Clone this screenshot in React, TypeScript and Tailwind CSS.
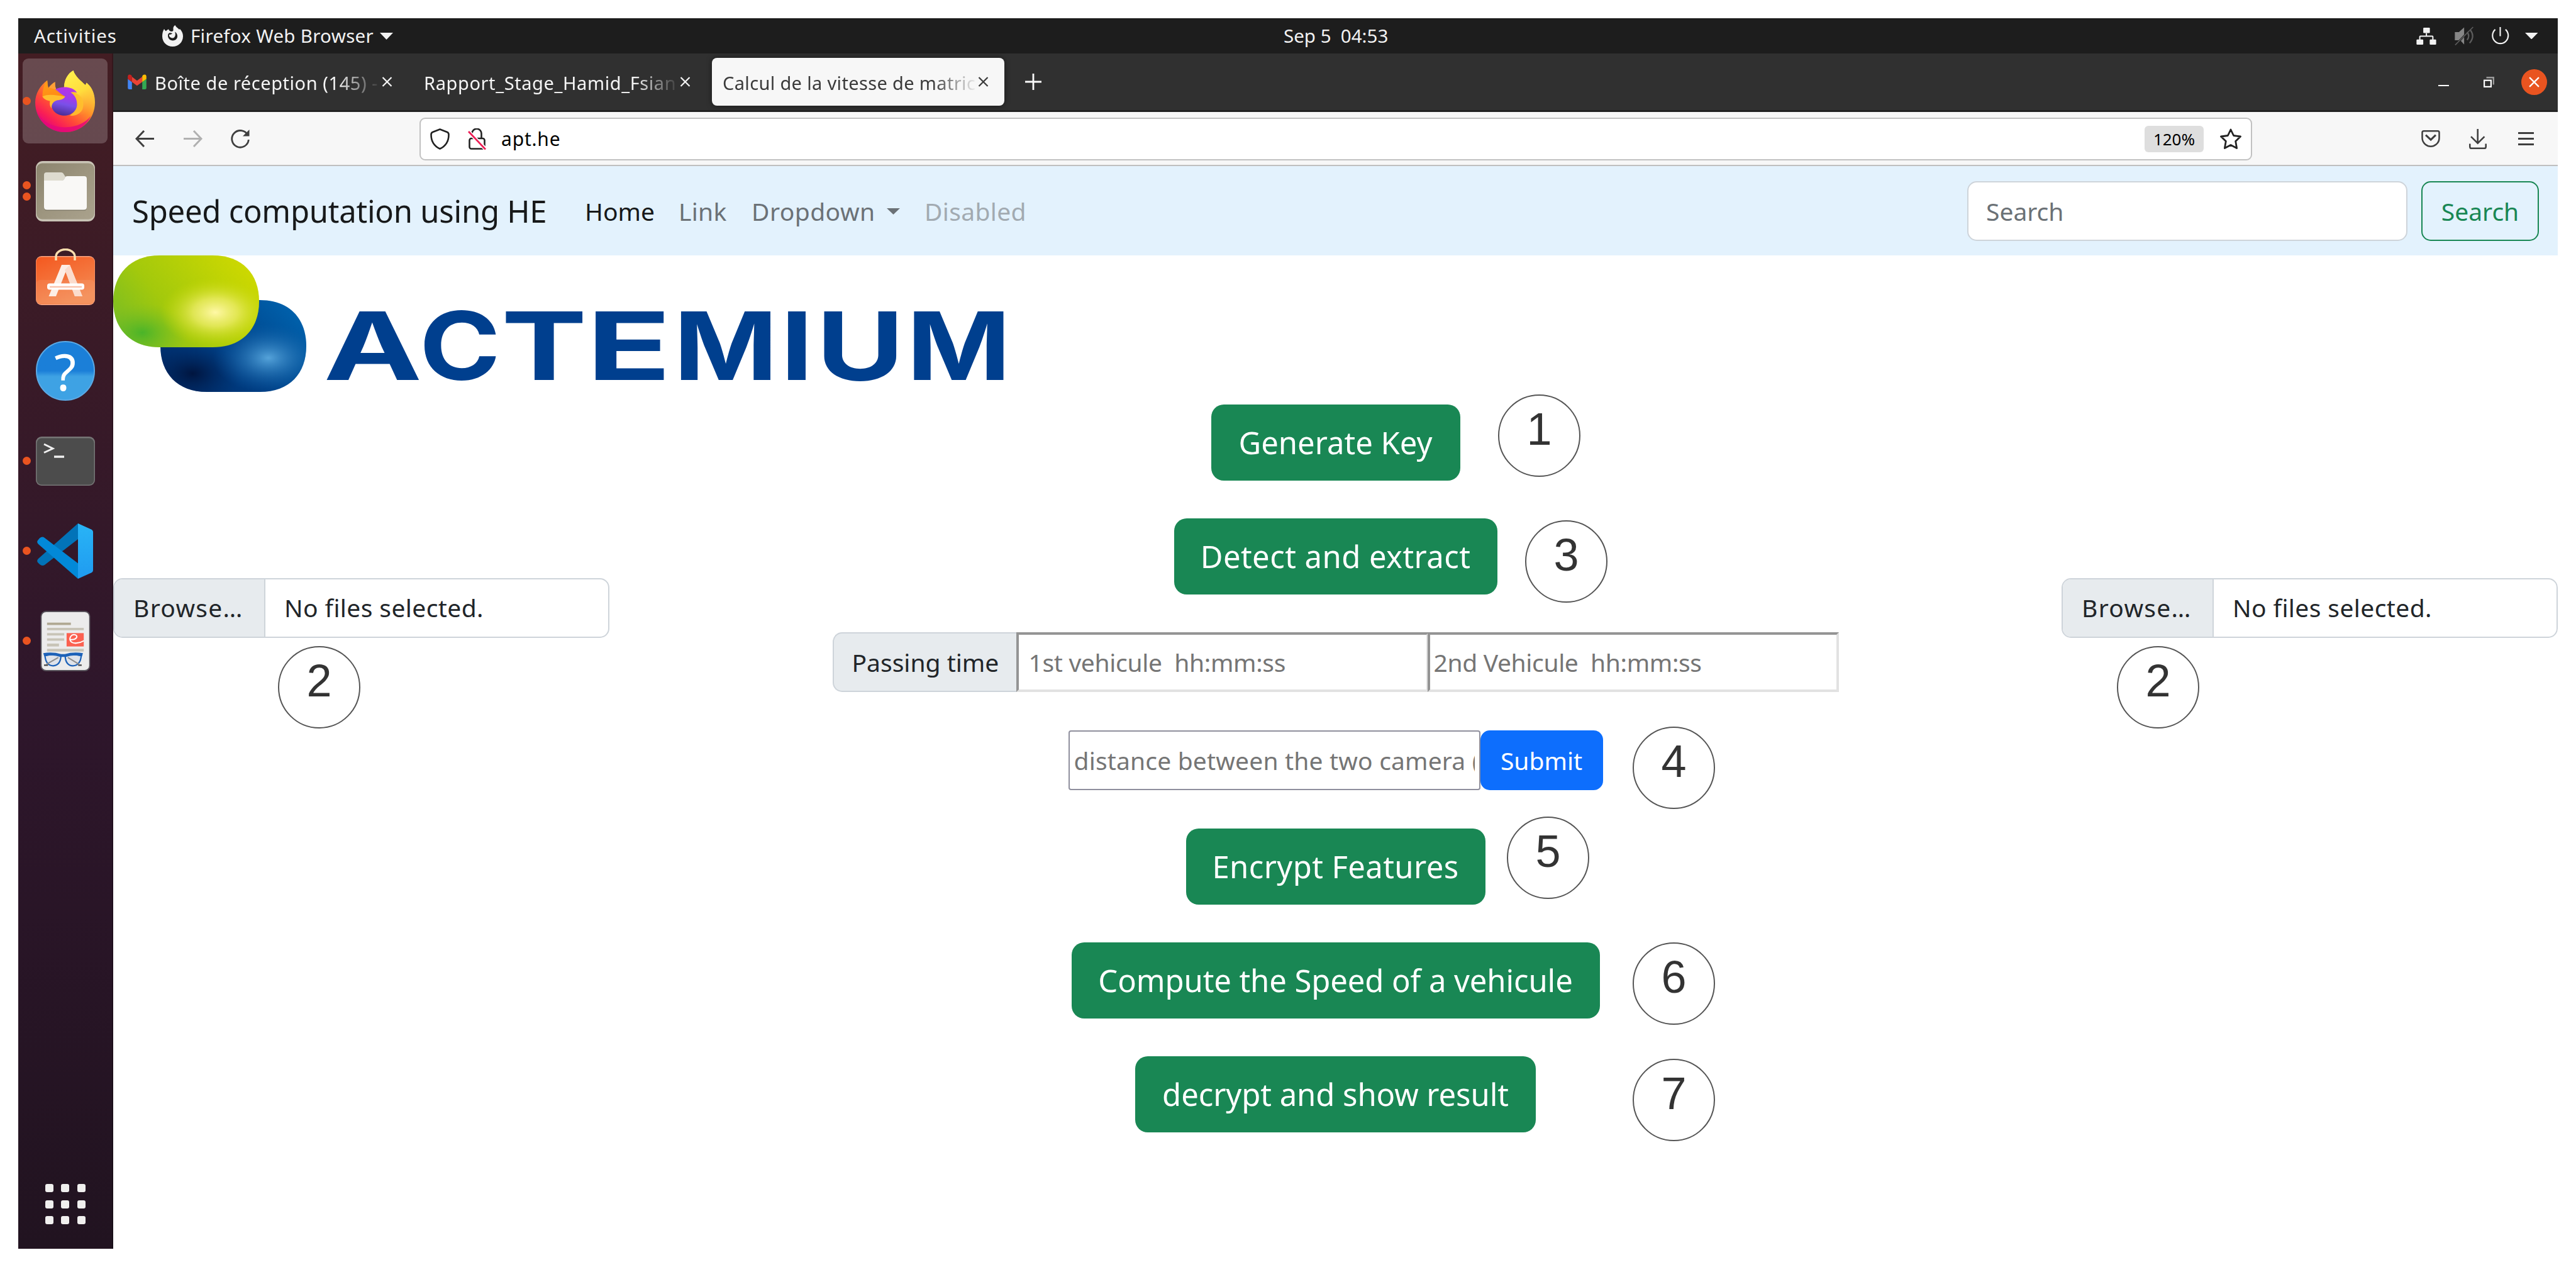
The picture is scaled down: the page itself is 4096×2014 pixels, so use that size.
import type { ReactNode } from "react";

/* ---------- small icons ---------- */

function Triangle({ className }: { className: string }) {
  return (
    <svg className={className} viewBox="0 0 20 10" preserveAspectRatio="none" fill="currentColor">
      <path d="M0 0H20L10 10Z" />
    </svg>
  );
}

function FirefoxMono() {
  return (
    <svg className="h-[34px] w-[33px]" viewBox="0 0 33 34">
      <path
        fill="#f2f2f2"
        fillRule="evenodd"
        d="M3 6C4 8 5 9 6 9.500C7 8 8.500 7 10 6.500C10.500 8 12 9.500 14 10C16 10 18 9.500 17.500 7C17 4 18 1.500 20.500 0C21.500 3 25 4.500 27 7L28 6C31 9 33 13 33 17.500C33 27 26 34 16.500 34C7 34 0 27 0 17.500C0 13 1 9 3 6ZM11 15C13 15 15 14.500 16 13C13.500 12 11 11.500 9.500 14C8 18 10 24 16.500 24.500C22 24.500 24.500 20.500 24 16.500C23.600 13.500 22 11.500 20 10.500C22 14.500 20.500 21 16 20.500C12.500 20 10.500 18 11 15Z"
      />
    </svg>
  );
}

function NetworkIcon() {
  return (
    <svg className="h-[27px] w-[32px]" viewBox="53 42 125 108">
      <g fill="#f2f2f2">
        <rect x="96" y="42" width="42" height="34" rx="5" />
        <rect x="53" y="117" width="43" height="33" rx="5" />
        <rect x="137" y="117" width="41" height="33" rx="5" />
      </g>
      <path d="M116 76V96M74 118V100Q74 96 78 96H153Q157 96 157 100V118" fill="none" stroke="#f2f2f2" strokeWidth="8" />
    </svg>
  );
}

function MutedIcon() {
  return (
    <svg className="h-[30px] w-[30px]" viewBox="293 40 119 120">
      <path d="M294 76H320L353 46V92L318 128H294Z" fill="#868686" />
      <path d="M353 108V155L332 132Z" fill="#868686" />
      <path d="M296 158L410 44" stroke="#5c5c5c" strokeWidth="7" />
      <path d="M372 76Q392 100 372 126M392 62Q424 104 388 146" fill="none" stroke="#5c5c5c" strokeWidth="9" />
    </svg>
  );
}

function PowerIcon() {
  return (
    <svg className="h-[28px] w-[28px]" viewBox="527 42 110 110" fill="none" stroke="#f2f2f2" strokeWidth="8.500">
      <path d="M580 42V99" />
      <path d="M549 57A49 50 0 1 0 613 57" />
    </svg>
  );
}

function Cross({ className }: { className: string }) {
  return (
    <svg className={className} viewBox="0 0 16 16" fill="none" stroke="currentColor" strokeWidth="2.200">
      <path d="M1 1L15 15M15 1L1 15" />
    </svg>
  );
}

function GmailIcon() {
  return (
    <svg className="h-[24px] w-[30px] shrink-0" viewBox="680 108 117 95">
      <path d="M680 138L706 156V203H690Q680 203 680 193Z" fill="#4285f4" />
      <path d="M797 138L771 156V203H787Q797 203 797 193Z" fill="#34a853" />
      <path d="M706 124L738 149L771 124V156L738 180L706 156Z" fill="#ea4335" />
      <path d="M680 138V122Q682 104 700 112L706 120V156Z" fill="#c5221f" />
      <path d="M797 138V122Q795 104 777 112L771 120V156Z" fill="#fbbc04" />
    </svg>
  );
}

function ArrowIcon({ className }: { className: string }) {
  return (
    <svg className={className} viewBox="0 0 30 27" fill="none" stroke="currentColor" strokeWidth="3">
      <path d="M30 13.500H2M14 1L2 13.500L14 26" />
    </svg>
  );
}

function ReloadIcon() {
  return (
    <svg className="ml-[45px] h-[30px] w-[30px]" viewBox="0 0 30 30" fill="none" stroke="#3f3f3f" strokeWidth="2.800">
      <path d="M27 9A13.300 13.300 0 1 0 28.300 16" />
      <path d="M29.500 0V10.500H19Z" fill="#3f3f3f" stroke="none" />
    </svg>
  );
}

function ShieldIcon() {
  return (
    <svg className="ml-[15px] h-[34px] w-[31px]" viewBox="0 0 31 34" fill="none" stroke="#222" strokeWidth="2.600">
      <path d="M15.500 1.500L27 6Q29.500 7 29.500 10Q29.500 26 15.500 32.500Q1.500 26 1.500 10Q1.500 7 4 6Z" strokeLinejoin="round" />
    </svg>
  );
}

function InsecureLockIcon() {
  return (
    <svg className="ml-[29px] h-[34px] w-[29px]" viewBox="0 0 29 34" fill="none">
      <rect x="2.500" y="16" width="24" height="16.500" rx="3" stroke="#222" strokeWidth="2.600" />
      <path d="M6.500 8A7.500 7.500 0 0 1 21.500 8.500V15.500" stroke="#222" strokeWidth="2.600" />
      <path d="M1 5L28 33" stroke="#fff" strokeWidth="6" />
      <path d="M1 5L28 33.500" stroke="#ee1f56" strokeWidth="2.800" />
    </svg>
  );
}

function StarIcon() {
  return (
    <svg className="mr-[14px] ml-[25px] h-[34px] w-[36px]" viewBox="0 0 36 34" fill="none" stroke="#222" strokeWidth="2.800" strokeLinejoin="round">
      <path d="M18 2L22.600 11.500L33.500 13L25.700 20.500L27.600 31.500L18 26.400L8.400 31.500L10.300 20.500L2.500 13L13.400 11.500Z" />
    </svg>
  );
}

function PocketIcon() {
  return (
    <svg className="h-[27px] w-[30px]" viewBox="87 699 117 107" fill="none" stroke="#3f3f3f" strokeWidth="10">
      <path d="M102 704H190Q199 704 199 713V748Q199 774 180 788Q164 801 146 801Q127 801 111 788Q92 772 92 748V713Q92 704 102 704Z" />
      <path d="M114 729L146 759L177 729" strokeWidth="12" />
    </svg>
  );
}

function DownloadIcon() {
  return (
    <svg className="h-[32px] w-[29px]" viewBox="387 681 114 125" fill="none" stroke="#3f3f3f" strokeWidth="10">
      <path d="M441 681V768M399 728L441 770L483 728" />
      <path d="M392 773V793Q392 802 401 802H483Q492 802 492 793V773" />
    </svg>
  );
}

/* ---------- dock icons ---------- */

function FirefoxIcon() {
  return (
    <svg className="h-[98px] w-[95px]" viewBox="105 75 373 385">
      <defs>
        <linearGradient id="fxBody" x1="0.850" y1="0.120" x2="0.250" y2="0.950">
          <stop offset="0" stopColor="#ffe847" />
          <stop offset="0.220" stopColor="#ffc531" />
          <stop offset="0.450" stopColor="#ff8a2a" />
          <stop offset="0.680" stopColor="#ff4a38" />
          <stop offset="0.860" stopColor="#f91f55" />
          <stop offset="1" stopColor="#e3087a" />
        </linearGradient>
        <linearGradient id="fxGlobe" x1="0.600" y1="0" x2="0.400" y2="1">
          <stop offset="0" stopColor="#b733e6" />
          <stop offset="0.350" stopColor="#a03cea" />
          <stop offset="0.600" stopColor="#7a50e8" />
          <stop offset="1" stopColor="#4a2c94" />
        </linearGradient>
        <linearGradient id="fxFlame" x1="0.300" y1="0" x2="0.700" y2="1">
          <stop offset="0" stopColor="#fff04c" />
          <stop offset="0.500" stopColor="#ffdc3c" />
          <stop offset="1" stopColor="#ff9a3c" stopOpacity="0" />
        </linearGradient>
        <linearGradient id="fxHead" x1="0" y1="0" x2="0.300" y2="1">
          <stop offset="0" stopColor="#ffa016" />
          <stop offset="1" stopColor="#ff8a16" />
        </linearGradient>
      </defs>
      <path
        fill="url(#fxBody)"
        d="M180 137C182 155 182 172 188 184C200 168 214 156 229 147C228 165 230 182 236 192L285 180C286 132 310 92 343 75C354 112 388 138 418 166L426 152L444 170C468 198 478 236 478 275C478 380 395 460 291 460C187 460 105 380 105 275C105 220 135 170 180 137Z"
      />
      <path
        fill="#e3087a"
        d="M112 320C140 400 220 432 300 430C370 426 420 400 452 360C425 422 365 460 291 460C200 460 135 405 112 320Z"
        opacity="0.850"
      />
      <path fill="#ffa238" opacity="0.900" d="M188 184C200 168 214 156 229 147C228 165 230 180 236 194Z" />
      <path fill="url(#fxFlame)" d="M285 180C286 132 310 92 343 75C354 112 388 138 418 166L426 152L444 170C468 198 478 236 474 275C470 330 430 360 380 350C420 300 400 215 285 180Z" />
      <path fill="#ffc12e" d="M325 210C385 212 420 262 400 318C385 350 350 362 320 356C360 335 385 270 325 210Z" opacity="0.900" />
      <path
        fill="url(#fxGlobe)"
        d="M232 192C265 172 340 172 366 214C352 210 340 208 326 212C352 228 366 255 366 287C366 327 330 357 287 357C244 357 207 328 207 290C207 262 225 250 240 235Z"
      />
      <path fill="url(#fxHead)" d="M180 137C182 155 182 172 188 184C215 186 240 196 254 212C266 224 280 230 292 238L240 250L150 240C150 200 160 160 180 137Z" />
      <path fill="#ffbf2e" d="M150 238C190 218 240 232 292 238C282 256 262 259 244 261C218 268 206 284 207 312C196 300 194 284 197 266C180 262 160 256 150 238Z" />
    </svg>
  );
}

function FilesIcon() {
  return (
    <svg className="h-[96px] w-[94px]" viewBox="0 0 94 96">
      <defs>
        <linearGradient id="filesBg" x1="0" y1="0" x2="1" y2="1">
          <stop offset="0" stopColor="#8b846e" />
          <stop offset="0.500" stopColor="#9d957f" />
          <stop offset="1" stopColor="#aaa28d" />
        </linearGradient>
      </defs>
      <rect width="94" height="96" rx="11" fill="#c9c4b6" />
      <rect x="1" y="3.500" width="92" height="89" rx="9" fill="url(#filesBg)" />
      <path d="M13 60V22Q13 18 17 18H40Q43 18 44.500 21L47 25V60Z" fill="#dedbcf" />
      <path d="M13 31H41Q44 31 45.500 28L47 25Q48 24 50 24H77Q81 24 81 28V74Q81 79 76 79H18Q13 79 13 74Z" fill="#6d6856" opacity="0.600" />
      <path d="M13 31H41Q44 31 45.500 28L47 25Q48 24 50 24H77Q81 24 81 28V73Q81 77.500 76 77.500H18Q13 77.500 13 73Z" fill="#f9f8f6" />
    </svg>
  );
}

function SoftwareIcon() {
  return (
    <svg className="mb-[13px] h-[90px] w-[94px]" viewBox="0 0 94 90">
      <defs>
        <linearGradient id="bag" x1="0" y1="0" x2="0.500" y2="1">
          <stop offset="0" stopColor="#f4581f" />
          <stop offset="1" stopColor="#f48a52" />
        </linearGradient>
      </defs>
      <rect y="12" width="94" height="78" rx="9" fill="#f9a583" />
      <rect x="0.500" y="13.500" width="93" height="75" rx="8" fill="url(#bag)" />
      <rect x="0.500" y="50" width="93" height="37" rx="6" fill="#fff" opacity="0.080" />
      <path d="M32 19V13A15 11.500 0 0 1 62 13V19" fill="none" stroke="#fbdfae" strokeWidth="3.500" />
      <path d="M41 26H54L74 76H62L47.500 37L32 76H20.500Z" fill="#fdeee6" />
      <path d="M54 26L74 76H62L46 34Z" fill="#fbdccd" />
      <rect x="18" y="55.500" width="59" height="10" rx="4" fill="#fff" />
      <path d="M22 61H73" stroke="#fac3ad" strokeWidth="2.500" />
    </svg>
  );
}

function HelpIcon() {
  return (
    <div className="flex h-[95px] w-[94px] items-center justify-center rounded-full border-2 border-[#5ba9e4] bg-linear-to-b from-[#1b7fd8] from-50% to-[#3ea2e4] to-60%">
      <span className="text-[80px] leading-none text-white">?</span>
    </div>
  );
}

function TerminalIcon() {
  return (
    <svg className="h-[78px] w-[94px]" viewBox="0 0 94 78">
      <rect width="94" height="78" rx="9" fill="#767676" />
      <rect x="1.500" y="2.500" width="91" height="74" rx="8" fill="#4c4c4c" />
      <path d="M13 12L27 19L13 25.500" fill="none" stroke="#f0f0f0" strokeWidth="3" />
      <path d="M29 32H45" stroke="#f0f0f0" strokeWidth="3.500" />
    </svg>
  );
}

function CodeIcon() {
  return (
    <svg className="h-[88px] w-[89px]" viewBox="0 0 89 88">
      <defs>
        <linearGradient id="codePanel" x1="0" y1="0" x2="0" y2="1">
          <stop offset="0" stopColor="#29b4f6" />
          <stop offset="1" stopColor="#1f9bf0" />
        </linearGradient>
      </defs>
      <path d="M65 0V25L12 66Q8 68.500 4 65L1 62Q-1 59 2 56Z" fill="#0273b8" />
      <path d="M65 88V63.500L12 23Q8 20 4 23.500L1 27Q-1 30 2 33Z" fill="#0289d8" />
      <path d="M65 0L86 9.500Q89 11 89 14V74Q89 77 86 78.500L65 88Z" fill="url(#codePanel)" />
    </svg>
  );
}

function DocumentViewerIcon() {
  return (
    <svg className="h-[96px] w-[80px]" viewBox="103 52 313 380">
      <rect x="103" y="52" width="313" height="380" rx="34" fill="#57525a" />
      <rect x="110" y="60" width="299" height="364" rx="28" fill="#ececec" />
      <rect x="144" y="126" width="150" height="15" fill="#b0a892" />
      <g fill="#c8c4b7">
        <rect x="144" y="159" width="231" height="15" />
        <rect x="144" y="192" width="108" height="15" />
        <rect x="144" y="225" width="108" height="15" />
        <rect x="144" y="258" width="75" height="18" />
        <rect x="144" y="291" width="231" height="17" />
      </g>
      <rect x="267" y="192" width="108" height="84" fill="#fb6150" />
      <path d="M290 232C325 238 344 212 322 203C298 196 280 222 292 242C306 262 346 258 376 240" fill="none" stroke="#fff" strokeWidth="8" />
      <g fill="#dfe3ea" stroke="#1d62b8" strokeWidth="9">
        <path d="M131 334Q180 322 231 334Q230 394 182 398Q136 396 131 334Z" />
        <path d="M258 334Q310 322 359 334Q354 396 306 398Q260 396 258 334Z" />
      </g>
      <path d="M140 388L215 345M345 388L275 345" stroke="#8d8d8d" strokeWidth="8" />
      <path d="M120 318Q180 308 232 324H256Q310 308 370 318L364 338Q310 324 262 342H228Q180 324 126 338Z" fill="#1d62b8" />
      <path d="M125 394H150M340 394H362" stroke="#444" strokeWidth="9" />
    </svg>
  );
}

function DockItem({ dots = 0, active = false, children }: { dots?: number; active?: boolean; children: ReactNode }) {
  return (
    <div
      className={
        "relative flex h-[135px] w-[135px] items-center justify-center rounded-[9px] " + (active ? "bg-white/20" : "")
      }
    >
      <div className="absolute top-0 left-0 flex h-full flex-col items-center justify-center gap-[5px]">
        {Array.from({ length: dots }, (_, i) => (
          <span key={i} className="h-[13px] w-[13px] rounded-full bg-[#e95420]" />
        ))}
      </div>
      {children}
    </div>
  );
}

function Dock() {
  return (
    <aside className="flex w-[151px] shrink-0 flex-col items-center justify-between border-r-2 border-black/20 bg-linear-to-b from-[#431d23] via-[#2e162b] via-55% to-[#211320] pt-[8px] pb-[39px]">
      <div className="flex flex-col gap-[8px]">
        <DockItem dots={1} active>
          <FirefoxIcon />
        </DockItem>
        <DockItem dots={2}>
          <FilesIcon />
        </DockItem>
        <DockItem>
          <SoftwareIcon />
        </DockItem>
        <DockItem>
          <HelpIcon />
        </DockItem>
        <DockItem dots={1}>
          <TerminalIcon />
        </DockItem>
        <DockItem dots={1}>
          <CodeIcon />
        </DockItem>
        <DockItem dots={1}>
          <DocumentViewerIcon />
        </DockItem>
      </div>
      <div className="grid grid-cols-3 gap-[12.500px]">
        {Array.from({ length: 9 }, (_, i) => (
          <span key={i} className="h-[13px] w-[13px] rounded-[3px] bg-[#f0efee]" />
        ))}
      </div>
    </aside>
  );
}

/* ---------- desktop and browser chrome ---------- */

function TopBar() {
  return (
    <header className="flex h-[56px] items-center bg-[#1d1d1d] text-[29.5px] leading-none text-[#f2f2f2]">
      <div className="flex w-[2012px] items-center pl-[25px]">
        <span className="w-[204px] tracking-[0.9px]">Activities</span>
        <FirefoxMono />
        <span className="ml-[12px] tracking-[0.3px]">Firefox Web Browser</span>
        <Triangle className="ml-[10px] h-[11px] w-[21px]" />
      </div>
      <span className="whitespace-pre">Sep 5  04:53</span>
      <div className="ml-auto flex items-center pr-[32px]">
        <NetworkIcon />
        <span className="w-[29px]" />
        <MutedIcon />
        <span className="w-[29px]" />
        <PowerIcon />
        <Triangle className="ml-[25px] h-[10.500px] w-[20.500px]" />
      </div>
    </header>
  );
}

function TabLabel({ children }: { children: ReactNode }) {
  return (
    <span className="min-w-0 flex-1 overflow-hidden pt-[4px] leading-[44px] whitespace-pre [mask-image:linear-gradient(to_left,transparent,black_72px)]">
      {children}
    </span>
  );
}

function TabStrip() {
  return (
    <div className="flex h-[93px] items-center border-b-[3px] border-[#222] bg-[#303030] pl-[3px] text-[29px] text-[#f5f5f5]">
      <div className="flex h-[76px] w-[465px] items-center pr-[24px] pl-[20px]">
        <GmailIcon />
        <span className="w-[13px] shrink-0" />
        <TabLabel>
          <span className="tracking-[0.55px]">Boîte de réception (145) - </span>
        </TabLabel>
        <Cross className="h-[16px] w-[17px] shrink-0" />
      </div>
      <div className="ml-[10px] flex h-[76px] w-[464px] items-center pr-[24px] pl-[16px]">
        <TabLabel>
          <span className="tracking-[0.6px]">Rapport_Stage_Hamid_Fsian</span>
        </TabLabel>
        <Cross className="h-[16px] w-[17px] shrink-0" />
      </div>
      <div className="ml-[10px] flex h-[76px] w-[465px] items-center rounded-[8px] bg-[#f7f7f7] pr-[25px] pl-[17px] text-[#3a3a3a] shadow-[0_0_8px_rgba(0,0,0,0.5)]">
        <TabLabel>
          <span className="tracking-[0.35px]">Calcul de la vitesse de matric</span>
        </TabLabel>
        <Cross className="h-[16px] w-[17px] shrink-0" />
      </div>
      <svg className="ml-[33px] h-[26px] w-[26px]" viewBox="0 0 26 26" stroke="#fafafa" strokeWidth="2.800">
        <path d="M13 0V26M0 13H26" />
      </svg>
      <div className="ml-auto flex items-center pr-[17px]">
        <span className="mt-[11px] h-[2px] w-[17px] bg-white" />
        <svg className="ml-[55px] h-[17px] w-[17px]" viewBox="0 0 17 17" fill="none">
          <path d="M4.500 1.200H15.800V12.500" stroke="#999" strokeWidth="2.400" />
          <rect x="1.100" y="5.700" width="10.800" height="10.200" stroke="#fff" strokeWidth="2.200" />
        </svg>
        <span className="ml-[43px] flex h-[41px] w-[41px] items-center justify-center rounded-full bg-[#e95420] text-white">
          <Cross className="h-[17px] w-[17px]" />
        </span>
      </div>
    </div>
  );
}

function Toolbar() {
  return (
    <div className="flex h-[86px] items-center border-b-2 border-[#bfbfbf] bg-[#f7f7f7] pt-[1px] pl-[35px]">
      <ArrowIcon className="h-[27px] w-[30px] text-[#3f3f3f]" />
      <ArrowIcon className="ml-[47px] h-[27px] w-[30px] rotate-180 text-[#b0b0b0]" />
      <ReloadIcon />
      <div className="ml-[270px] flex h-[68px] w-[2914px] items-center rounded-[9px] border-2 border-[#c1c1c1] bg-white text-black">
        <ShieldIcon />
        <InsecureLockIcon />
        <span className="ml-[24px] pt-[1px] text-[30px] leading-none tracking-[0.8px]">apt.he</span>
        <span className="ml-auto flex h-[42px] w-[94px] items-center justify-center rounded-[6px] bg-[#dedede] text-[26px] leading-none">
          120%
        </span>
        <StarIcon />
      </div>
      <div className="ml-auto flex items-center pr-[38px]">
        <PocketIcon />
        <span className="w-[46px]" />
        <DownloadIcon />
        <span className="ml-[49px] flex w-[25px] flex-col gap-[6px]">
          <span className="h-[3px] bg-[#3f3f3f]" />
          <span className="h-[3px] bg-[#3f3f3f]" />
          <span className="h-[3px] bg-[#3f3f3f]" />
        </span>
      </div>
    </div>
  );
}

/* ---------- web page ---------- */

function NavBar() {
  return (
    <nav className="flex h-[142px] items-center bg-[#e3f2fd] pr-[30px] pl-[30px] text-[39px] leading-none text-[#6b7176]">
      <a className="w-[720px] text-[49px] tracking-[-0.25px] whitespace-nowrap text-[#17191a]">Speed computation using HE</a>
      <a className="w-[149px] text-[#17191a]">Home</a>
      <a className="w-[116px] tracking-[0.3px]">Link</a>
      <a className="w-[215px] tracking-[0.45px]">Dropdown</a>
      <Triangle className="mt-[2px] h-[10px] w-[21px]" />
      <a className="ml-[39px] tracking-[0.35px] text-[#a2aab1]">Disabled</a>
      <div className="ml-auto flex h-[95px]">
        <div className="flex w-[700px] items-center rounded-[15px] border-2 border-[#ced4da] bg-white pl-[28px]">Search</div>
        <button className="ml-[22px] w-[187px] rounded-[15px] border-2 border-[#198754] text-[#198754]">Search</button>
      </div>
    </nav>
  );
}

/* glyph, left edge, drawn width, left bearing and ink width at 150px */
const WORDMARK: [string, number, number, number, number][] = [
  ["A", 338.7, 148.3, 3, 106],
  ["C", 494, 115, 6, 99],
  ["T", 623.7, 122.7, 5, 90],
  ["E", 767.3, 109.5, 10, 74],
  ["M", 903.2, 142, 10, 120],
  ["I", 1073.3, 28.7, 10, 23],
  ["U", 1130, 115.7, 9.500, 91],
  ["M", 1273.6, 142, 10, 120],
];

function Logo() {
  const pebble = "M74 0H158C206 0 232 30 232 73S206 146 158 146H74C27 146 0 116 0 73S27 0 74 0Z";
  return (
    <svg className="block h-[237px] w-[1440px]" viewBox="0 0 1440 237">
      <defs>
        <linearGradient id="lime" x1="0" y1="0.700" x2="1" y2="0.200">
          <stop offset="0" stopColor="#7bbd22" />
          <stop offset="0.350" stopColor="#a3c90c" />
          <stop offset="1" stopColor="#cfd900" />
        </linearGradient>
        <radialGradient id="limeGlow" cx="0.700" cy="0.620" r="0.380">
          <stop offset="0" stopColor="#fff8a6" />
          <stop offset="0.400" stopColor="#ecec66" stopOpacity="0.800" />
          <stop offset="1" stopColor="#c6d800" stopOpacity="0" />
        </radialGradient>
        <radialGradient id="limeShade" cx="0.200" cy="0.840" r="0.320">
          <stop offset="0" stopColor="#3fb22b" stopOpacity="0.850" />
          <stop offset="1" stopColor="#7bbd22" stopOpacity="0" />
        </radialGradient>
        <linearGradient id="navy" x1="0" y1="0.800" x2="1" y2="0.200">
          <stop offset="0" stopColor="#002a66" />
          <stop offset="0.450" stopColor="#003f85" />
          <stop offset="1" stopColor="#0062ad" />
        </linearGradient>
        <radialGradient id="navyGlow" cx="0.740" cy="0.630" r="0.380">
          <stop offset="0" stopColor="#55a3da" />
          <stop offset="1" stopColor="#0a5aa3" stopOpacity="0" />
        </radialGradient>
        <radialGradient id="navyShade" cx="0.220" cy="0.800" r="0.340">
          <stop offset="0" stopColor="#00153f" />
          <stop offset="1" stopColor="#002a66" stopOpacity="0" />
        </radialGradient>
      </defs>
      <g transform="translate(75 71)">
        <path d={pebble} fill="url(#navy)" />
        <path d={pebble} fill="url(#navyShade)" />
        <path d={pebble} fill="url(#navyGlow)" />
      </g>
      <path d={pebble} fill="url(#lime)" />
      <path d={pebble} fill="url(#limeShade)" />
      <path d={pebble} fill="url(#limeGlow)" />
      <g fill="#003f8e" className="font-['Inter'] text-[150px] font-bold">
        {WORDMARK.map(([glyph, left, width, bearing, ink], i) => (
          <text key={i} transform={`translate(${left - (bearing * width) / ink} 198) scale(${width / ink} 1)`}>
            {glyph}
          </text>
        ))}
      </g>
    </svg>
  );
}

function FileInput() {
  return (
    <div className="mt-[276px] flex h-[95px] w-[789px] shrink-0 overflow-hidden rounded-[15px] border-2 border-[#ced4da] bg-white pb-0 text-[39px] leading-none text-[#212529]">
      <div className="flex w-[240px] items-center border-r-2 border-[#ced4da] bg-[#e7ebee] pb-[2px] pl-[30px] tracking-[1.3px]">
        Browse…
      </div>
      <div className="flex items-center pb-[2px] pl-[30px] tracking-[0.4px]">No files selected.</div>
    </div>
  );
}

function GreenButton({ className, children }: { className: string; children: ReactNode }) {
  return (
    <button className={"h-[121px] rounded-[20px] bg-[#198754] text-[49px] leading-none whitespace-nowrap text-white " + className}>
      {children}
    </button>
  );
}

const STEPS: [string, string][] = [
  ["1", "left-[2202px] top-[221px]"],
  ["3", "left-[2245px] top-[421px]"],
  ["2", "left-[262px] top-[621px]"],
  ["2", "left-[3186px] top-[621px]"],
  ["4", "left-[2416px] top-[749px]"],
  ["5", "left-[2216px] top-[892px]"],
  ["6", "left-[2416px] top-[1092px]"],
  ["7", "left-[2416px] top-[1277px]"],
];

function Page() {
  return (
    <main className="relative flex-1 bg-white">
      <Logo />
      <div className="flex items-start justify-between">
        <FileInput />
        <div className="flex flex-col items-center">
          <GreenButton className="w-[396px]">Generate Key</GreenButton>
          <GreenButton className="mt-[60px] w-[514px] tracking-[0.45px]">Detect and extract</GreenButton>
          <div className="mt-[60px] flex h-[95px] text-[39px] leading-none">
            <div className="flex w-[292px] items-center rounded-l-[15px] border-2 border-r-0 border-[#ced4da] bg-[#e7ebee] pl-[29px] text-[#212529]">
              Passing time
            </div>
            <div className="flex w-[656px] items-center border-4 border-[#949494] border-r-[#e2e2e2] border-b-[#e2e2e2] pl-[16px] tracking-[-0.33px] whitespace-pre text-[#757575]">
              1st vehicule  hh:mm:ss
            </div>
            <div className="-ml-[2px] flex w-[654px] items-center border-4 border-[#949494] border-r-[#e2e2e2] border-b-[#e2e2e2] pl-[6px] tracking-[-0.35px] whitespace-pre text-[#757575]">
              2nd Vehicule  hh:mm:ss
            </div>
          </div>
          <div className="mt-[61px] flex h-[95px] text-[39px] leading-none">
            <div className="flex w-[655px] items-center rounded-[4px] border-2 border-[#8f8f9d] px-[7px] text-[#757575]">
              <span className="overflow-hidden leading-[60px] tracking-[0.17px] whitespace-nowrap">
                distance between the two camera (
              </span>
            </div>
            <button className="w-[195px] rounded-[15px] bg-[#0d6efd] text-white">Submit</button>
          </div>
          <GreenButton className="mt-[61px] w-[476px] tracking-[0.4px]">Encrypt Features</GreenButton>
          <GreenButton className="mt-[60px] w-[840px] tracking-[-0.1px]">Compute the Speed of a vehicule</GreenButton>
          <GreenButton className="mt-[60px] w-[637px] tracking-[-0.07px]">decrypt and show result</GreenButton>
        </div>
        <FileInput />
      </div>
      {STEPS.map(([label, place], i) => (
        <div
          key={i}
          className={
            "absolute h-[131px] w-[131px] rounded-full border-[2.5px] border-[#555] pt-[17px] text-center font-['Liberation_Sans'] text-[72px] leading-[72px] text-[#333] " +
            place
          }
        >
          {label}
        </div>
      ))}
    </main>
  );
}

export default function App() {
  return (
    <div className="h-[2014px] w-[4096px] overflow-hidden bg-white p-[29px] font-['Noto_Sans',sans-serif]">
      <div className="flex h-[1956px] w-[4038px] flex-col">
        <TopBar />
        <div className="flex flex-1">
          <Dock />
          <div className="flex flex-1 flex-col">
            <TabStrip />
            <Toolbar />
            <NavBar />
            <Page />
          </div>
        </div>
      </div>
    </div>
  );
}
